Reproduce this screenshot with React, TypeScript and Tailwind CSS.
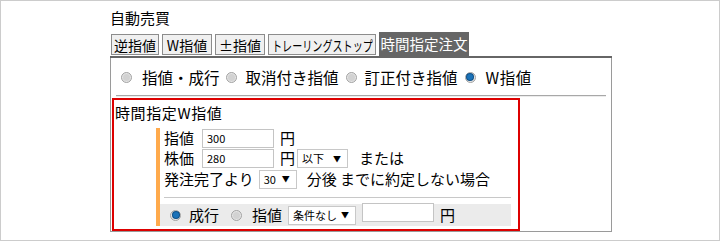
const font = { fontFamily: '"Noto Sans CJK JP", "Noto Sans", sans-serif' };

function Radio({ on }: { on?: boolean }) {
  return (
    <span className="inline-flex h-[11px] w-[11px] shrink-0 items-center justify-center rounded-full border border-[#a3a3a3] bg-[#e4e4e4]">
      {on ? (
        <span className="h-[6px] w-[6px] rounded-full bg-[#1b72b8] ring-1 ring-[#0d4f86]" />
      ) : (
        <span className="h-[7px] w-[7px] rounded-full bg-[#d2d2d2]" />
      )}
    </span>
  );
}

function Input({ value, w = 'w-[72px]' }: { value?: string; w?: string }) {
  return (
    <span className={`inline-flex h-[19px] ${w} items-center border border-[#c4c4c4] bg-white px-[4px] text-[11px] leading-none text-black`}>
      {value}
    </span>
  );
}

function Select({ label, w }: { label: string; w: string }) {
  return (
    <span className={`inline-flex h-[19px] ${w} items-center justify-between border border-[#c8c8c8] bg-white pl-[4px] pr-[6px] text-[11px] leading-none text-black`}>
      <span>{label}</span>
      <span className="text-[8px]">▼</span>
    </span>
  );
}

const tabs = [
  { t: '逆指値', w: 'w-[48px]' },
  { t: 'W指値', w: 'w-[50px]' },
  { t: '±指値', w: 'w-[50px]' },
];

export default function App() {
  return (
    <div style={font} className="h-[243px] w-[721px] bg-white">
      <div className="h-[241px] w-[720px] border border-[#cccccc] pl-[109px] pt-[7px] text-black">
        <div className="text-[15px] leading-[20px]">自動売買</div>

        <div className="mt-[4px] flex w-[502px] items-end gap-[3px] border-b-2 border-[#666] pl-[1px]">
          {tabs.map((t) => (
            <span key={t.t} className={`mb-[1px] flex h-[21px] ${t.w} items-center justify-center border border-[#8c8c8c] bg-[#f0f0f0] text-[14px] leading-none`}>
              {t.t}
            </span>
          ))}
          <span className="mb-[1px] flex h-[21px] w-[108px] items-center overflow-hidden border border-[#8c8c8c] bg-[#f0f0f0] px-[3px] text-[14px] leading-none">
            <span className="origin-left scale-x-[0.72] whitespace-nowrap">トレーリングストップ</span>
          </span>
          <span className="flex h-[24px] w-[90px] items-center justify-center bg-[#666] text-[14.5px] leading-none text-white">
            時間指定注文
          </span>
        </div>

        <div className="h-[174px] w-[502px] border-x border-b border-[#9a9a9a]">
          <div className="flex items-center pl-[10px] pt-[9px] text-[15.5px] leading-[20px]">
            <Radio />
            <span className="ml-[10px] mr-[6px]">指値・成行</span>
            <Radio />
            <span className="ml-[9px] mr-[7px]">取消付き指値</span>
            <Radio />
            <span className="ml-[8px] mr-[7px]">訂正付き指値</span>
            <Radio on />
            <span className="ml-[10px] tracking-[0.5px]">W指値</span>
          </div>
          <div className="mx-[5px] mt-[8px] border-t border-[#a8a8a8]" />
          <div className="mx-[5px] border-t border-[#ececec]" />

          <div className="ml-[1px] mt-[1px] h-[133px] w-[408px] border-2 border-[#dd0000] pt-[3px]">
            <div className="pl-[1px] text-[15px] leading-[20px] tracking-[0.6px]">時間指定W指値</div>
            <div className="ml-[42px] mr-[7px] mt-[5px] border-l-[4px] border-[#ffaa4c]">
              <div className="pl-[4px] text-[15px]">
                <div className="flex h-[20px] items-center">
                  <span className="mr-[8px]">指値</span>
                  <Input value="300" />
                  <span className="ml-[6px]">円</span>
                </div>
                <div className="flex h-[21px] items-center">
                  <span className="mr-[8px]">株価</span>
                  <Input value="280" />
                  <span className="ml-[6px] mr-[2px]">円</span>
                  <Select label="以下" w="w-[51px]" />
                  <span className="ml-[11px]">または</span>
                </div>
                <div className="flex h-[20px] items-center">
                  <span className="mr-[5px]">発注完了より</span>
                  <Select label="30" w="w-[38px]" />
                  <span className="ml-[10px]">分後 までに約定しない場合</span>
                </div>
                <div className="mt-[8px] h-[7px] border-t border-[#c8c8c8]" />
              </div>
              <div className="flex h-[22px] items-center bg-[#ebebeb] pl-[10px] text-[15px]">
                <Radio on />
                <span className="ml-[8px] mr-[12px]">成行</span>
                <Radio />
                <span className="ml-[10px] mr-[6px]">指値</span>
                <Select label="条件なし" w="w-[68px]" />
                <span className="ml-[6px]">
                  <Input />
                </span>
                <span className="ml-[6px]">円</span>
              </div>
            </div>
          </div>
        </div>
      </div>
    </div>
  );
}
